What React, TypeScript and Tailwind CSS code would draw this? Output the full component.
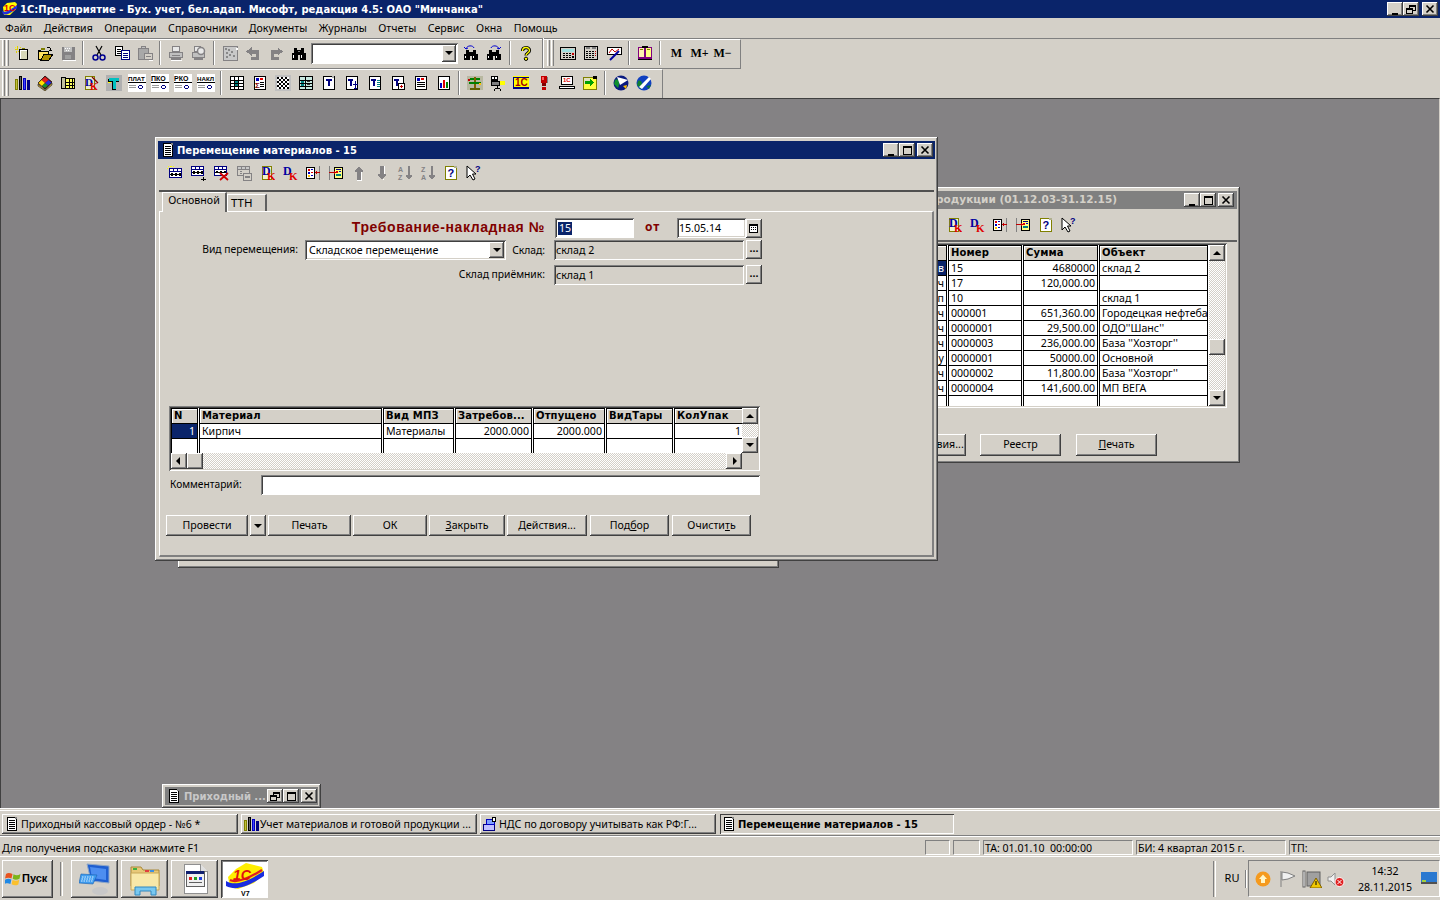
import React from "react";

const RAISED = "shadow-[inset_-1px_-1px_0_#404040,inset_1px_1px_0_#ffffff,inset_-2px_-2px_0_#808080]";
const SUNKEN = "shadow-[inset_1px_1px_0_#808080,inset_-1px_-1px_0_#ffffff,inset_2px_2px_0_#404040,inset_-2px_-2px_0_#d4d0c8]";
const DITHER = "bg-[repeating-conic-gradient(#d4d0c8_0_25%,#ffffff_0_50%)] bg-[length:2px_2px]";
const BOLD = "font-['DejaVu_Sans',sans-serif] font-bold";

function Px({ d = "", s = 16, children, vb = 16 }: { d?: string; s?: number; children?: React.ReactNode; vb?: number }) {
  return (
    <svg width={s} height={s} viewBox={`0 0 ${vb} ${vb}`} shapeRendering="crispEdges" className="block shrink-0">
      {d.split(" ").filter(Boolean).map((q, i) => {
        const [x, y, w, h, c] = q.split(",");
        return <rect key={i} x={x} y={y} width={w} height={h} fill={c} />;
      })}
      {children}
    </svg>
  );
}

const SmoothT = ({ x, y, f, fs, c, ff = "Liberation Sans", b = true, i = false }: { x: number; y: number; f: string; fs: number; c: string; ff?: string; b?: boolean; i?: boolean }) => (
  <text x={x} y={y} fontSize={fs} fill={c} fontFamily={ff} fontWeight={b ? 700 : 400} fontStyle={i ? "italic" : "normal"} shapeRendering="auto">{f}</text>
);

const tableBase = "2,3,13,10,#000080 3,4,3,2,#fff 7,4,3,2,#fff 11,4,3,2,#fff 3,7,11,5,#fff 3,9,11,1,#000 4,8,2,1,#000 8,8,2,1,#000 12,8,2,1,#000 4,10,2,1,#000 8,10,2,1,#000 12,10,2,1,#000";
const docLines = "3,1,10,14,#000 4,2,8,12,#fff 5,4,6,1,#000 5,6,6,1,#000 5,8,6,1,#000 5,10,6,1,#000 5,12,6,1,#000 11,1,2,2,#808080";

const Dk = ({ doc }: { doc?: boolean }) => (
  <Px d={doc ? "3,1,10,14,#808000 4,2,8,12,#f4f0d0" : ""}>
    <SmoothT x={doc ? 3 : 1} y={10} f="D" fs={12} c="#0000a0" ff="Liberation Serif" />
    <SmoothT x={doc ? 8 : 7} y={15} f="K" fs={11} c="#e00000" ff="Liberation Serif" />
  </Px>
);

const Plate = ({ t }: { t: string }) => (
  <Px s={18} vb={18} d="0,0,18,18,#fff 0,8,18,1,#000 1,11,7,1,#999 1,13,7,1,#999 11,11,3,1,#000080 10,12,1,2,#000080 14,12,1,2,#000080 11,14,3,1,#000080">
    <SmoothT x={0} y={7} f={t} fs={t.length > 3 ? 6.2 : 7} c="#000" />
  </Px>
);

const ICONS: Record<string, React.ReactNode> = {
  new: <Px d="5,4,9,11,#000 6,5,7,9,#fff 7,6,6,8,#d8d8b8 1,2,1,1,#ff0 3,1,1,3,#e0d000 1,4,3,1,#e0d000 6,2,1,1,#e0d000 4,6,1,1,#e0d000 8,3,3,1,#808000 2,6,1,2,#e0d000" />,
  open: <Px d="1,5,3,1,#000 1,6,11,9,#000 2,7,9,7,#ffe060 4,3,4,2,#808000 10,2,3,1,#000 13,3,1,3,#000 12,5,3,1,#000"><path d="M4 15 L7 9 H16 L12 15 Z" fill="#b09000" stroke="#000" strokeWidth="1" /></Px>,
  save: <Px d="2,2,13,13,#848284 4,2,8,5,#c0c0c0 5,3,1,1,#fff 7,3,1,1,#fff 9,3,1,1,#fff 6,5,1,1,#fff 8,5,1,1,#fff 5,10,6,4,#a0a0a0 3,15,13,1,#fff" />,
  cut: <Px><g shapeRendering="auto" fill="none"><path d="M5 1 L10 10 M11 1 L6 10" stroke="#000" strokeWidth="1.2" /><ellipse cx="4.5" cy="12.5" rx="2.5" ry="2.5" stroke="#000090" strokeWidth="1.5" /><ellipse cx="11.5" cy="12.5" rx="2.5" ry="2.5" stroke="#000090" strokeWidth="1.5" /></g></Px>,
  copy: <Px d="1,1,8,10,#000 2,2,6,8,#fff 3,4,4,1,#000 3,6,4,1,#000 3,8,4,1,#000 7,5,9,10,#000080 8,6,7,8,#fff 9,8,5,1,#000080 9,10,5,1,#000080 9,12,5,1,#000080" />,
  paste: <Px d="1,3,11,12,#848284 2,4,9,10,#a8a8a8 4,1,5,3,#848284 5,2,3,1,#c0c0c0 7,8,9,7,#848284 8,9,7,5,#d4d0c8 9,11,5,1,#848284 12,15,4,1,#fff" />,
  print: <Px d="4,1,8,6,#848284 5,2,6,4,#e8e8e8 1,7,14,6,#848284 2,8,12,4,#c0c0c0 3,13,10,2,#848284 4,10,8,1,#848284 3,15,11,1,#fff" />,
  preview: <Px d="3,1,7,6,#848284 4,2,5,4,#e8e8e8 1,7,13,6,#848284 2,8,11,4,#c0c0c0 3,13,9,2,#848284"><circle cx="10" cy="6" r="3.5" fill="#e8e8e8" stroke="#848284" strokeWidth="1.5" shapeRendering="auto" /></Px>,
  gdoc: <Px d="1,1,15,15,#848284 2,2,13,13,#c8c8c8 3,3,2,2,#888 6,4,2,2,#888 9,6,2,2,#888 4,7,2,2,#888 7,9,2,2,#888 11,10,2,2,#888 4,11,2,2,#888 14,3,2,2,#fff" />,
  undo: <Px><path d="M6 3 L2 6.5 L6 10 V8 H11 V12 H6 V14 H13 V5 H6 Z" fill="#848284" stroke="#848284" /></Px>,
  redo: <Px><path d="M10 3 L14 6.5 L10 10 V8 H5 V12 H10 V14 H3 V5 H10 Z" fill="#848284" stroke="#848284" /></Px>,
  bino: <Px d="1,8,6,7,#000 9,8,6,7,#000 3,3,3,5,#000 10,3,3,5,#000 6,5,4,5,#000 2,10,1,3,#fff 10,10,1,3,#fff 7,6,2,1,#808080" />,
  binoB: <Px d="1,9,6,6,#000 9,9,6,6,#000 3,5,3,4,#000 10,5,3,4,#000 6,7,4,4,#000 2,11,1,2,#fff 10,11,1,2,#fff"><path d="M3 4 C4 0 10 0 11 3 M3 4 L1 2 M3 4 L5 3" stroke="#0000d0" fill="none" shapeRendering="auto" /></Px>,
  binoF: <Px d="1,9,6,6,#000 9,9,6,6,#000 3,5,3,4,#000 10,5,3,4,#000 6,7,4,4,#000 2,11,1,2,#fff 10,11,1,2,#fff"><path d="M13 4 C12 0 6 0 5 3 M13 4 L15 2 M13 4 L11 3" stroke="#0000d0" fill="none" shapeRendering="auto" /></Px>,
  help: <Px><g shapeRendering="auto"><path d="M4.5 6 C4.5 1.5 11.5 1.5 11.5 5.5 C11.5 8 8 8 8 10.5" stroke="#000" strokeWidth="3.2" fill="none" /><path d="M4.5 6 C4.5 1.5 11.5 1.5 11.5 5.5 C11.5 8 8 8 8 10.5" stroke="#ffff00" strokeWidth="1.4" fill="none" /><circle cx="8" cy="13.8" r="1.7" fill="#ffff00" stroke="#000" /></g></Px>,
  calc: <Px d="0,2,16,13,#000 1,3,14,11,#d4d0c8 2,4,12,3,#a0e0e0 3,8,2,1,#000 6,8,2,1,#000 9,8,2,1,#000 12,8,2,2,#c00000 3,10,2,1,#000 6,10,2,1,#000 9,10,2,1,#000 3,12,2,1,#000 6,12,2,1,#000 9,12,2,1,#000 12,11,2,2,#000" />,
  kbd: <Px d="1,1,14,14,#000 2,2,12,12,#d4d0c8 3,2,4,2,#808080 9,2,4,2,#808080 3,6,2,1,#000 6,6,2,1,#000 9,6,2,1,#000 12,6,1,1,#c00000 3,8,2,1,#000 6,8,2,1,#000 9,8,2,1,#000 12,8,1,1,#c00000 3,10,2,1,#000 6,10,2,1,#000 9,10,2,1,#000 12,10,1,1,#c00000 3,12,2,1,#000 6,12,2,1,#000 9,12,2,1,#000" />,
  chart: <Px d="1,2,15,8,#000 2,3,13,6,#fff"><path d="M3 8 L6 4 L9 7 L13 4" stroke="#c00000" fill="none" shapeRendering="auto" /><path d="M13 6 L4 15" stroke="#0000a0" strokeWidth="2" shapeRendering="auto" /></Px>,
  book: <Px d="1,2,7,12,#800080 2,3,5,9,#fff0b0 8,2,7,12,#800080 9,3,5,9,#ffff80 1,14,14,1,#000 3,4,3,1,#808000 10,4,3,1,#808000 5,1,6,2,#000" />,
  books: <Px d="1,4,3,11,#808000 2,5,1,9,#c0c040 5,1,3,14,#000 6,2,1,12,#606060 9,3,3,12,#0000c0 10,4,1,10,#4040ff 13,5,3,10,#000080" />,
  cbook: <Px><g shapeRendering="auto"><path d="M8 1 L15 7 L8 14 L1 8 Z" fill="#800000" stroke="#000" strokeWidth="0.7" /><path d="M8 2 L11.5 5 L8 8 L4.5 5 Z" fill="#e02020" /><path d="M11.5 5 L14.5 7.5 L11 10.5 L8 8 Z" fill="#2030e0" /><path d="M4.5 5 L8 8 L5 11 L1.5 8 Z" fill="#ffe000" /><path d="M8 8 L11 10.5 L8 13 L5 11 Z" fill="#109030" /><path d="M1 9 L8 15 L15 8 V10 L8 16 L1 11 Z" fill="#c0a040" stroke="#000" strokeWidth="0.5" /></g></Px>,
  ytab: <Px d="1,2,5,12,#000 2,3,3,10,#c0c0a0 5,3,10,11,#000 6,4,8,9,#ffff60 9,4,1,9,#000 12,4,1,9,#000 6,7,8,1,#000 6,10,8,1,#000" />,
  dkarrow: <Px d="2,1,10,14,#808000 3,2,8,12,#e8e8d0"><SmoothT x={2} y={11} f="D" fs={11} c="#0000a0" ff="Liberation Serif" /><SmoothT x={7} y={15} f="K" fs={10} c="#e00000" ff="Liberation Serif" /><path d="M9 2 L15 8" stroke="#800000" strokeWidth="1.2" shapeRendering="auto" /></Px>,
  tee: <Px d="0,0,16,16,#b0b0b0 2,4,11,3,#000 6,4,4,11,#000 3,3,10,3,#00c0c0 7,3,3,11,#00c0c0 2,7,3,1,#ff0" />,
  tgrid: <Px d="1,1,14,14,#000 2,2,12,12,#fff 2,5,12,1,#000 5,2,1,12,#000 9,2,1,12,#000 2,8,12,1,#000 2,11,12,1,#000 6,6,3,2,#008080 6,9,3,2,#008080" />,
  sumdoc: <Px d="2,1,12,14,#000 3,2,10,12,#fff 4,3,3,3,#0000c0 8,3,3,2,#e00000 8,7,4,1,#000 8,9,4,1,#000 8,11,4,1,#000"><SmoothT x={3} y={13} f="Σ" fs={8} c="#800000" /></Px>,
  check: <Px d="0,0,16,16,#c0c0c0 2,2,12,12,#000 4,2,2,2,#fff 8,2,2,2,#fff 12,2,2,2,#fff 2,4,2,2,#fff 6,4,2,2,#fff 10,4,2,2,#fff 4,6,2,2,#fff 8,6,2,2,#fff 12,6,2,2,#fff 2,8,2,2,#fff 6,8,2,2,#fff 10,8,2,2,#fff 4,10,2,2,#fff 8,10,2,2,#fff 12,10,2,2,#fff 2,12,2,2,#fff 6,12,2,2,#fff 10,12,2,2,#fff" />,
  tgrid2: <Px d="1,1,14,14,#000 2,2,12,12,#c8e8e0 2,5,12,1,#000 7,2,1,12,#000 2,8,12,1,#000 2,11,12,1,#000 3,6,3,2,#008080 3,9,3,2,#008080 9,6,3,1,#333 9,9,3,1,#333" />,
  t1: <Px d="2,1,12,14,#000 3,2,10,12,#fff 11,1,2,2,#b0b0b0 5,4,6,2,#000080 7,4,2,7,#000080" />,
  t2: <Px d="2,1,12,14,#000 3,2,10,12,#fff 4,4,5,2,#000080 6,4,2,7,#000080 11,6,1,8,#000080 9,9,5,1,#000080 10,13,3,1,#000080" />,
  t3: <Px d="2,1,12,14,#000 3,2,10,12,#fff 4,4,5,2,#000080 6,4,2,7,#000080 10,5,3,1,#008080 10,7,3,1,#008080 10,9,3,1,#008080 10,11,3,1,#008080" />,
  t4: <Px d="2,1,12,14,#000 3,2,10,12,#fff 4,4,5,2,#000080 6,4,2,7,#000080 8,8,7,7,#000 9,9,5,5,#fff 10,11,3,1,#c00000 11,10,1,3,#c00000" />,
  lines: <Px d="2,1,12,14,#000 3,2,10,12,#fff 4,3,3,3,#0000c0 8,3,3,2,#e00000 4,7,8,1,#000 4,9,8,1,#000 4,11,8,1,#000" />,
  bars: <Px d="2,1,12,14,#000 3,2,10,12,#fff 4,8,2,5,#0000c0 7,5,2,8,#e00000 10,7,2,6,#008000" />,
  tree: <Px d="0,1,16,14,#b8b8a0 3,3,10,2,#008000 7,2,2,13,#806000 2,7,12,2,#008000 3,13,10,2,#606000 1,4,2,2,#c00000 12,8,2,2,#ffc000" />,
  cam: <Px d="1,1,7,6,#000 2,2,2,2,#fff 5,2,2,2,#fff 1,6,9,5,#000 2,7,7,3,#808080 10,6,5,4,#ffff00 7,11,1,2,#000 5,13,5,1,#000 4,14,1,2,#000 10,14,1,2,#000" />,
  oneC: <Px d="0,1,16,13,#ffff00 0,2,1,11,#000080 0,12,16,2,#000080 1,2,15,1,#000080"><SmoothT x={2} y={11} f="1С" fs={10} c="#a00000" /></Px>,
  excl: <Px d="5,1,6,7,#c00000 6,2,2,3,#ff6060 6,8,4,3,#800000 6,12,4,3,#c00000 11,2,1,6,#808080" />,
  pc: <Px d="2,1,12,9,#000 3,2,10,7,#fff 0,11,16,3,#000 1,12,14,1,#fff"><SmoothT x={4} y={7} f="1С" fs={6} c="#e00000" /></Px>,
  note: <Px d="1,2,14,13,#808000 2,3,12,11,#ffff40 2,3,6,6,#e0e0c0 11,1,4,3,#000 3,6,5,3,#00a000 8,4,1,7,#00a000 9,5,1,5,#00a000 10,6,1,3,#00a000 11,7,1,1,#00a000" />,
  globe1: <Px><g shapeRendering="auto"><circle cx="8" cy="8" r="7.5" fill="#0a1a80" /><path d="M2 5 C6 2 7 9 5 13 L1 9 Z" fill="#109030" /><path d="M4 2 L15 5 L7 10 Z" fill="#fff" /><path d="M10 11 L14 10 L13 14 Z" fill="#ffc000" /></g></Px>,
  globe2: <Px><g shapeRendering="auto"><circle cx="8" cy="8" r="7.5" fill="#1040c0" /><path d="M2 6 C6 4 7 10 5 14 L1 10 Z" fill="#108030" /><path d="M3 12 L13 2 L15 4 L6 14 Z" fill="#fff" /><path d="M10 11 L15 10 L13 14 Z" fill="#107040" /></g></Px>,
  tnew: <Px d={tableBase + " 1,1,1,1,#ff0 3,1,2,1,#ff0 0,3,1,1,#ff0 6,1,1,1,#ff0"} />,
  tadd: <Px d={"1,1,13,10,#000080 2,2,3,2,#fff 6,2,3,2,#fff 10,2,3,2,#fff 2,5,11,5,#fff 2,7,11,1,#000 3,6,2,1,#000 7,6,2,1,#000 11,6,2,1,#000 3,8,2,1,#000 7,8,2,1,#000 11,8,2,1,#000 13,12,1,4,#000 11,14,5,1,#000"} />,
  tdel: <Px d={"1,1,13,10,#000080 2,2,3,2,#fff 6,2,3,2,#fff 10,2,3,2,#fff 2,5,11,5,#fff 2,7,11,1,#000 3,6,2,1,#000 7,6,2,1,#000 11,6,2,1,#000"}><path d="M7 8 L15 15 M15 8 L7 15" stroke="#d00000" strokeWidth="1.8" shapeRendering="auto" /></Px>,
  tcopy: <Px d="1,1,13,10,#848284 2,2,3,2,#c8c8c8 6,2,3,2,#c8c8c8 10,2,3,2,#c8c8c8 2,5,11,5,#d4d0c8 7,8,9,8,#848284 8,9,7,6,#d4d0c8 9,11,5,2,#848284 4,6,2,1,#848284 4,8,2,1,#848284" />,
  dkd: <Dk doc />,
  dk: <Dk />,
  ml: <Px d="1,2,9,12,#000 2,3,7,10,#fff 3,4,2,2,#e00000 6,4,2,1,#0000c0 3,7,2,2,#0000c0 6,7,2,1,#e00000 3,10,2,2,#ffc000 6,10,2,1,#0000c0 14,1,1,14,#808080 10,7,5,1,#c00000 11,6,1,3,#c00000" />,
  mr: <Px d="6,2,9,12,#000 7,3,7,10,#ffff80 8,4,5,1,#000080 8,6,2,2,#e00000 11,6,2,1,#0000c0 8,9,5,2,#008080 1,1,1,14,#808080 1,7,7,1,#c00000 6,6,1,3,#c00000" />,
  up: <Px d="7,2,2,1,#848284 6,3,4,1,#848284 5,4,6,1,#848284 4,5,8,2,#848284 6,7,4,8,#848284 10,7,1,8,#fff 6,15,5,1,#fff" />,
  down: <Px d="6,1,4,8,#848284 4,9,8,2,#848284 5,11,6,1,#848284 6,12,4,1,#848284 7,13,2,1,#848284 10,1,1,8,#fff 9,14,1,1,#fff" />,
  az: <Px d="11,1,2,11,#848284 9,10,6,2,#848284 10,12,4,1,#848284 11,13,2,1,#848284"><SmoothT x={1} y={7} f="A" fs={7} c="#848284" /><SmoothT x={1} y={15} f="Z" fs={7} c="#848284" /></Px>,
  za: <Px d="11,1,2,11,#848284 9,10,6,2,#848284 10,12,4,1,#848284 11,13,2,1,#848284"><SmoothT x={1} y={7} f="Z" fs={7} c="#848284" /><SmoothT x={1} y={15} f="A" fs={7} c="#848284" /></Px>,
  qdoc: <Px d="2,1,12,14,#808000 3,2,10,12,#fff 11,1,3,2,#b0b090"><SmoothT x={4.5} y={12} f="?" fs={11} c="#000080" /></Px>,
  whats: <Px><path d="M1 1 V13 L4 10 L7 15 L9 14 L6.5 9 H10 Z" fill="#fff" stroke="#000" shapeRendering="auto" /><SmoothT x={9} y={7} f="?" fs={9} c="#000080" /></Px>,
};

function Tb({ n }: { n: string }) {
  return <div className="w-[23px] h-[22px] flex items-center justify-center shrink-0">{ICONS[n]}</div>;
}
const Sep = () => <div className="w-[8px] h-[24px] flex justify-center shrink-0"><div className="w-[2px] h-full border-l border-l-[#808080] border-r border-r-white" /></div>;
const Grip = () => (
  <div className="flex gap-px h-[26px] w-[7px] shrink-0">
    <div className="w-[3px] bg-[#d4d0c8] border-l border-l-white border-r border-r-[#808080]" />
    <div className="w-[3px] bg-[#d4d0c8] border-l border-l-white border-r border-r-[#808080]" />
  </div>
);

function Glyph({ t }: { t: "min" | "max" | "close" | "restore" }) {
  const d = {
    min: "3,9,6,2,#000",
    max: "2,1,9,9,#000 3,3,7,6,#d4d0c8",
    close: "",
    restore: "4,1,7,6,#000 5,3,5,3,#d4d0c8 1,4,7,6,#000 2,6,5,3,#d4d0c8",
  }[t];
  return (
    <svg width="12" height="11" viewBox="0 0 12 11" shapeRendering="crispEdges" className="block">
      {d.split(" ").filter(Boolean).map((q, i) => {
        const [x, y, w, h, c] = q.split(",");
        return <rect key={i} x={x} y={y} width={w} height={h} fill={c} />;
      })}
      {t === "close" && <path d="M2.5 1.5 L9.5 8.5 M9.5 1.5 L2.5 8.5" stroke="#000" strokeWidth="1.6" shapeRendering="auto" />}
    </svg>
  );
}
const WinBtn = ({ t }: { t: "min" | "max" | "close" | "restore" }) => (
  <div className={`w-[16px] h-[14px] shrink-0 bg-[#d4d0c8] flex items-center justify-center ${RAISED}`}><Glyph t={t} /></div>
);
const Arrow = ({ dir }: { dir: "up" | "down" | "left" | "right" }) => {
  const p = { up: "M4 2 L0 6 H8 Z", down: "M0 2 H8 L4 6 Z", left: "M5 0 V8 L1 4 Z", right: "M3 0 V8 L7 4 Z" }[dir];
  return <svg width="8" height="8" viewBox="0 0 8 8" className="block"><path d={p} fill="#000" /></svg>;
};
const SBtn = ({ dir, cls = "w-[16px] h-[16px]" }: { dir: "up" | "down" | "left" | "right"; cls?: string }) => (
  <div className={`${cls} bg-[#d4d0c8] flex items-center justify-center shrink-0 ${RAISED}`}><Arrow dir={dir} /></div>
);
const Btn = ({ w, h = "h-[21px]", children }: { w: string; h?: string; children: React.ReactNode }) => (
  <div className={`${w} ${h} bg-[#d4d0c8] flex items-center justify-center text-[10.6px] shrink-0 ${RAISED}`}>{children}</div>
);

function Logo({ s = 16 }: { s?: number }) {
  return (
    <svg width={s} height={s} viewBox="0 0 16 16" className="block shrink-0">
      <path d="M1 6 L5 2 L13 1 L15 3 L14 8 L8 14 L2 14 Z" fill="#ffff00" />
      <path d="M0 10 C4 12 8 9 15 4 L15 7 C10 11 5 15 1 13 Z" fill="#2030e0" />
      <text x="2" y="10" fontSize="9" fontWeight="700" fill="#e00000" fontFamily="Liberation Sans">1С</text>
    </svg>
  );
}

const ROW1A = ["new", "open", "save", "|", "cut", "copy", "paste", "|", "print", "preview", "|", "gdoc", "undo", "redo", "bino"];
const ROW1C = ["calc", "kbd", "chart", "|", "book", "|"];
const ROW2 = ["books", "cbook", "ytab", "dkarrow", "tee", "П", "К", "Р", "Н", "|", "tgrid", "sumdoc", "check", "tgrid2", "t1", "t2", "t3", "t4", "lines", "bars", "|", "tree", "cam", "oneC", "excl", "pc", "note", "|", "globe1", "globe2"];
const PLATE: Record<string, string> = { "П": "ПЛАТ", "К": "ПКО", "Р": "РКО", "Н": "НАКЛ" };

const renderIcons = (list: string[]) => list.map((n, i) => n === "|" ? <Sep key={i} /> : PLATE[n] ? <div key={i} className="w-[23px] h-[22px] flex items-center justify-center shrink-0"><Plate t={PLATE[n]} /></div> : <Tb key={i} n={n} />);

function Toolbars() {
  return (
    <div className="flex flex-col shrink-0 border-t border-t-[#808080]">
      <div className="h-[30px] w-[741px] flex items-center border-t border-t-white border-r border-r-[#808080] border-b border-b-[#808080] pl-[2px] pb-[2px]">
        <Grip />
        <div className="w-[1px]" />
        {renderIcons(ROW1A)}
        <div className="ml-[1px] w-[147px] h-[21px] bg-white flex justify-end p-[2px] shrink-0 shadow-[inset_1px_1px_0_#808080,inset_-1px_-1px_0_#ffffff,inset_2px_2px_0_#404040]">
          <SBtn dir="down" cls="w-[14px] h-[17px]" />
        </div>
        <div className="w-[1px]" />
        <Tb n="binoB" />
        <Tb n="binoF" />
        <div className="w-[9px] flex justify-center"><Sep /></div>
        <Tb n="help" />
        <div className="w-[6px] h-[30px] border-r border-r-[#808080] shrink-0" />
        <div className="w-[4px] h-[30px] border-l border-l-white shrink-0" />
        <Grip />
        <div className="w-[2px]" />
        {renderIcons(ROW1C)}
        <div className="w-[1px]" />
        <div className="flex items-center font-['Liberation_Serif',serif] font-bold text-[12px] text-black">
          <span className="w-[23px] text-center">M</span>
          <span className="w-[23px] text-center">M+</span>
          <span className="w-[23px] text-center">M−</span>
        </div>
      </div>
      <div className="h-[29px] w-[663px] flex items-center border-t border-t-white border-r border-r-[#808080] pl-[2px] pb-[2px]">
        <Grip />
        <div className="w-[1px]" />
        {renderIcons(ROW2)}
      </div>
    </div>
  );
}

const MENU = ["Файл", "Действия", "Операции", "Справочники", "Документы", "Журналы", "Отчеты", "Сервис", "Окна", "Помощь"];

const MAIN_COLS = "grid-cols-[27px_183px_71px_77px_72px_67px_70px]";
const HEAD_MAIN = ["N", "Материал", "Вид МПЗ", "Затребов...", "Отпущено", "ВидТары", "КолУпак"];

function HCell({ t }: { t: string }) {
  return <div className={`h-[16px] bg-[#d4d0c8] border border-black px-[2px] text-[10px] leading-[14px] overflow-hidden whitespace-nowrap ${BOLD} shadow-[inset_1px_1px_0_#ffffff]`}><span className="tracking-[0.15px]">{t}</span></div>;
}
function Cell({ t = "", right, sel }: { t?: string; right?: boolean; sel?: boolean }) {
  return (
    <div className={`h-[15px] border-x border-x-black border-b border-b-black px-[2px] text-[10.6px] leading-[15px] overflow-hidden whitespace-nowrap ${right ? "text-right" : ""} ${sel ? "bg-[#0a246a] text-white" : "bg-white"}`}>{t}</div>
  );
}

function MainGrid() {
  return (
    <div className={`ml-[9px] w-[591px] h-[65px] p-[2px] flex flex-col shrink-0 bg-[#d4d0c8] ${SUNKEN}`}>
      <div className="flex h-[45px]">
        <div className={`grid ${MAIN_COLS} gap-x-px bg-white flex-1 overflow-hidden content-start`}>
          {HEAD_MAIN.map((h) => <HCell key={h} t={h} />)}
          <Cell t="1" right sel />
          <Cell t="Кирпич" />
          <Cell t="Материалы" />
          <Cell t="2000.000" right />
          <Cell t="2000.000" right />
          <Cell />
          <Cell t="1" right />
          {Array.from({ length: 7 }).map((_, i) => <div key={i} className="h-[15px] border-x border-x-black" />)}
        </div>
        <div className={`w-[16px] flex flex-col justify-between ${DITHER}`}>
          <SBtn dir="up" />
          <SBtn dir="down" />
        </div>
      </div>
      <div className="flex h-[16px] bg-[#d4d0c8]">
        <SBtn dir="left" />
        <div className={`w-[16px] h-[16px] bg-[#d4d0c8] ${RAISED}`} />
        <div className={`flex-1 ${DITHER}`} />
        <SBtn dir="right" />
        <div className="w-[16px]" />
      </div>
    </div>
  );
}

const SInput = ({ w, t, white }: { w: string; t: string; white?: boolean }) => (
  <div className={`${w} h-[20px] pl-[2px] pr-[3px] pt-[2px] flex items-center text-[10.6px] shrink-0 ${white ? "bg-white" : "bg-[#d4d0c8]"} ${SUNKEN}`}>{t}</div>
);
const DotsBtn = () => <Btn w="w-[16px]" h="h-[19px]"><span className="font-bold leading-none relative -top-[1px]">...</span></Btn>;

function MainWindow() {
  return (
    <div className={`absolute left-[154px] top-[38px] w-[783px] h-[424px] bg-[#d4d0c8] p-[3px] flex flex-col z-20 ${RAISED}`}>
      <div className="h-[18px] mt-px bg-[#0a246a] flex items-center pl-[2px] pr-[2px] shrink-0">
        <Px d={docLines} />
        <span className={`ml-[1px] text-white text-[10px] whitespace-nowrap ${BOLD}`}>Перемещение материалов - 15</span>
        <div className="ml-auto flex"><WinBtn t="min" /><WinBtn t="max" /><div className="w-[2px]" /><WinBtn t="close" /></div>
      </div>
      <div className="h-[31px] flex items-center pl-[5px] pb-[3px] shrink-0">
        {["tnew", "tadd", "tdel", "tcopy", "dkd", "dk", "ml", "mr", "up", "down", "az", "za", "qdoc", "whats"].map((n) => <Tb key={n} n={n} />)}
      </div>
      <div className="flex-1 flex flex-col border-t-2 border-t-[#505050] ml-px mr-px mb-[1px] min-h-0">
        <div className="h-[19px] flex items-end pl-[3px] shrink-0 relative">
          <div className="relative z-10 top-[1px] w-[65px] h-[20px] bg-[#d4d0c8] border-t border-t-white border-l border-l-white border-r-2 border-r-[#606060] text-[10.6px] leading-[15px] text-center">Основной</div>
          <div className="w-[40px] h-[17px] border-t border-t-white border-l border-l-white border-r-2 border-r-[#606060] text-[11.5px] leading-[15px] pl-[3px]">ТТН</div>
        </div>
        <div className="flex-1 flex flex-col border-t border-t-white border-l border-l-white border-r-2 border-r-[#808080] border-b-2 border-b-[#808080]">
          <div className="flex items-center mt-[6px] h-[20px] shrink-0">
            <div className="w-[385px] text-right text-[#800000] font-['Liberation_Sans',sans-serif] font-bold text-[14px] tracking-[0.6px] whitespace-nowrap relative -top-[1px]">Требование-накладная №</div>
            <div className="ml-[10px] w-[79px] h-[20px] p-[3px] flex items-center text-[10.6px] bg-white shrink-0 shadow-[inset_1px_1px_0_#808080,inset_-1px_-1px_0_#ffffff,inset_2px_2px_0_#404040]"><span className="bg-[#0a246a] text-white leading-[13px] px-px">15</span></div>
            <div className="ml-[11px] w-[32px] text-[#800000] font-bold text-[12px] tracking-[1px] relative -top-[1px]">от</div>
            <div className="w-[69px]"><SInput w="w-[69px]" t="15.05.14" white /></div>
            <Btn w="w-[16px]" h="h-[19px]"><Px d="1,2,9,9,#000 2,4,7,6,#fff 3,5,1,1,#000 5,5,1,1,#000 7,5,1,1,#000 3,7,1,1,#000 5,7,1,1,#000 7,7,1,1,#000" s={12} vb={12} /></Btn>
          </div>
          <div className="flex items-center mt-[2px] h-[20px] shrink-0">
            <div className="w-[138px] text-right text-[10.3px] whitespace-nowrap">Вид перемещения:</div>
            <div className={`ml-[7px] w-[201px] h-[20px] bg-white p-[2px] pl-[4px] flex items-center justify-between text-[10.6px] shrink-0 ${SUNKEN}`}>
              <span className="relative top-[1px]">Складское перемещение</span>
              <SBtn dir="down" cls="w-[15px] h-[16px]" />
            </div>
            <div className="w-[39px] text-right text-[10.3px] relative top-[1px]">Склад:</div>
            <div className="ml-[9px] flex gap-[2px]"><SInput w="w-[190px]" t="склад 2" /><DotsBtn /></div>
          </div>
          <div className="flex items-center mt-[5px] h-[20px] shrink-0">
            <div className="w-[385px] text-right text-[10.3px]">Склад приёмник:</div>
            <div className="ml-[9px] flex gap-[2px]"><SInput w="w-[190px]" t="склад 1" /><DotsBtn /></div>
          </div>
          <div className="h-[121px] shrink-0" />
          <MainGrid />
          <div className="flex items-center mt-[4px] h-[20px] shrink-0">
            <div className="ml-[10px] w-[91px] text-[10.2px]">Комментарий:</div>
            <div className={`w-[499px] h-[20px] bg-white shrink-0 shadow-[inset_1px_1px_0_#808080,inset_-1px_-1px_0_#ffffff,inset_2px_2px_0_#404040]`} />
          </div>
          <div className="flex ml-[6px] mt-[20px] gap-[2px]">
            <Btn w="w-[82px]">Провести</Btn>
            <Btn w="w-[16px]"><Arrow dir="down" /></Btn>
            <Btn w="w-[83px]">Печать</Btn>
            <Btn w="w-[74px]">ОК</Btn>
            <Btn w="w-[76px]"><span><u>З</u>акрыть</span></Btn>
            <Btn w="w-[80px]"><span><u>Д</u>ействия...</span></Btn>
            <Btn w="w-[79px] ml-[1px]"><span>Под<u>б</u>ор</span></Btn>
            <Btn w="w-[79px] ml-[1px]"><span>Очисти<u>т</u>ь</span></Btn>
          </div>
        </div>
      </div>
    </div>
  );
}

const ROWS: [string, string, string, string][] = [
  ["в", "15", "4680000", "склад 2"],
  ["ч", "17", "120,000.00", ""],
  ["п", "10", "", "склад 1"],
  ["ч", "000001", "651,360.00", "Городецкая нефтебаза"],
  ["ч", "0000001", "29,500.00", "ОДО''Шанс''"],
  ["ч", "0000003", "236,000.00", "База ''Хозторг''"],
  ["у", "0000001", "50000.00", "Основной"],
  ["ч", "0000002", "11,800.00", "База ''Хозторг''"],
  ["ч", "0000004", "141,600.00", "МП ВЕГА"],
];

function RightWindow() {
  return (
    <div className={`absolute left-[699px] top-[88px] w-[540px] h-[276px] bg-[#d4d0c8] p-[3px] flex flex-col z-10 ${RAISED}`}>
      <div className="h-[18px] mt-px bg-[#808080] flex items-center justify-end pr-[3px] shrink-0">
        <span className={`mr-[67px] text-[#d4d0c8] text-[10.5px] whitespace-nowrap ${BOLD}`}>Учет материалов и готовой продукции (01.12.03-31.12.15)</span>
        <WinBtn t="min" /><WinBtn t="max" /><div className="w-[2px]" /><WinBtn t="close" />
      </div>
      <div className="h-[31px] flex items-center justify-end pr-[157px] shrink-0">
        {["dkd", "dk", "ml", "mr", "qdoc", "whats"].map((n) => <Tb key={n} n={n} />)}
      </div>
      <div className="flex-1 flex flex-col items-end border-t-2 border-t-[#606060] pt-[1px] pr-[10px]">
        <div className={`w-[323px] h-[165px] p-[2px] flex bg-[#d4d0c8] shrink-0 ${SUNKEN}`}>
          <div className="flex-1 grid grid-cols-[41px_74px_75px_109px] gap-x-px bg-white overflow-hidden content-start">
            <HCell t="" /><HCell t="Номер" /><HCell t="Сумма" /><HCell t="Объект" />
            {ROWS.map((r, i) => (
              <React.Fragment key={i}>
                <Cell t={r[0]} right sel={i === 0} />
                <Cell t={r[1]} />
                <Cell t={r[2]} right />
                <Cell t={r[3]} />
              </React.Fragment>
            ))}
            {[0, 1, 2, 3].map((i) => <div key={i} className="h-[15px] border-x border-x-black" />)}
          </div>
          <div className={`w-[16px] flex flex-col ${DITHER}`}>
            <SBtn dir="up" />
            <div className="h-[78px]" />
            <div className={`w-[16px] h-[16px] bg-[#d4d0c8] ${RAISED}`} />
            <div className="flex-1" />
            <SBtn dir="down" />
          </div>
        </div>
        <div className="flex mt-[26px] pr-[70px] gap-[14px]">
          <Btn w="w-[62px]" h="h-[22px]">Действия...</Btn>
          <Btn w="w-[81px]" h="h-[22px]">Реестр</Btn>
          <Btn w="w-[81px] ml-[1px]" h="h-[22px]"><span><u>П</u>ечать</span></Btn>
        </div>
      </div>
    </div>
  );
}

function DocTabs() {
  const Tab = ({ w, icon, t }: { w: string; icon: React.ReactNode; t: string }) => (
    <div className={`${w} h-[20px] flex items-center px-[2px] gap-[1px] text-[10.6px] whitespace-nowrap overflow-hidden shrink-0 ${RAISED}`}>{icon}<span className="relative top-[1px]">{t}</span></div>
  );
  return (
    <div className="h-[28px] shrink-0 border-t border-t-white flex flex-col">
      <div className="h-[2px] border-b border-b-white shrink-0" />
      <div className="flex pl-[2px] pt-[3px] gap-[3px] pb-[1px] border-b border-b-[#808080] flex-1">
        <Tab w="w-[236px]" icon={<Px d={docLines} />} t="Приходный кассовый ордер - №6 *" />
        <Tab w="w-[236px]" icon={ICONS.books} t="Учет материалов и готовой продукции ..." />
        <Tab w="w-[236px]" icon={<Px d="1,8,12,7,#000080 2,9,10,5,#c0c0ff 4,3,9,6,#0000c0 5,4,7,4,#80a0ff 10,1,4,5,#000 11,2,2,3,#fff" />} t="НДС по договору учитывать как РФ:Г..." />
        <div className="w-[234px] ml-[1px] h-[20px] flex items-center px-[1px] gap-[1px] shrink-0 shadow-[inset_1px_1px_0_#404040,inset_-1px_-1px_0_#ffffff]">
          <Px d={docLines} /><span className={`text-[10px] whitespace-nowrap ${BOLD}`}>Перемещение материалов - 15</span>
        </div>
      </div>
    </div>
  );
}

function StatusBar() {
  const P = ({ w, t = "" }: { w: string; t?: string }) => (
    <div className={`${w} h-[15px] shrink-0 border border-t-[#808080] border-l-[#808080] border-r-white border-b-white text-[10.6px] leading-[14px] pl-px whitespace-pre overflow-hidden`}>{t}</div>
  );
  return (
    <div className="h-[21px] shrink-0 flex items-center border-t border-t-white border-b border-b-white pt-[2px]">
      <div className="pl-[2px] text-[10.6px] w-[925px] shrink-0 relative top-[1px]">Для получения подсказки нажмите F1</div>
      <div className="flex gap-[3px]">
        <P w="w-[25px]" /><P w="w-[27px]" />
        <P w="w-[150px]" t="ТА: 01.01.10  00:00:00" />
        <P w="w-[150px]" t="БИ: 4 квартал 2015 г." />
        <P w="w-[151px]" t="ТП:" />
      </div>
    </div>
  );
}

function Taskbar() {
  const TB = ({ children, active }: { children: React.ReactNode; active?: boolean }) => (
    <div className={`w-[47px] h-[38px] flex items-center justify-center shrink-0 ${active ? "bg-white shadow-[inset_1px_1px_0_#404040,inset_-1px_-1px_0_#ffffff,inset_2px_2px_0_#808080]" : RAISED}`}>{children}</div>
  );
  return (
    <div className="h-[43px] shrink-0 flex items-center pl-[2px]">
      <div className={`w-[51px] h-[38px] flex items-center gap-[1px] pl-[3px] shrink-0 ${RAISED}`}>
        <svg width="16" height="16" viewBox="0 0 16 16" className="block shrink-0">
          <path d="M1 3 C3 1.5 5 2 7.5 3 L6.5 7.5 C4.5 6.5 2.5 6.5 0 7.5 Z" fill="#e8531f" />
          <path d="M8.5 3.3 C11 4.5 13 4.5 15.5 3 L14.5 7.7 C12 9 10 9 7.7 7.8 Z" fill="#7cb518" />
          <path d="M0 8.7 C2.5 7.6 4.5 7.6 6.4 8.6 L5.4 13 C3.5 12 1.5 12 -1 13 Z" fill="#1e88e5" />
          <path d="M7.5 9 C10 10 12 10 14.3 8.8 L13.3 13.4 C11 14.6 8.9 14.6 6.6 13.3 Z" fill="#fbc02d" />
        </svg>
        <span className="text-[11px] font-bold font-['Liberation_Sans',sans-serif]">Пуск</span>
      </div>
      <div className="ml-[7px] w-[3px] h-[34px] bg-[#d4d0c8] border-l border-l-[#808080] border-r border-r-white shrink-0" />
      <div className="ml-[8px] flex gap-[3px]">
        <TB>
          <svg width="32" height="34" viewBox="0 0 32 34" className="block">
            <path d="M8 2 L30 4 V21 L12 19 Z" fill="#1f5fd0" stroke="#8fa8c8" />
            <path d="M11 5 L27 7 V18 L13 16 Z" fill="#4d8ef0" />
            <ellipse cx="21" cy="29" rx="8" ry="4" fill="#c8c8c8" />
            <path d="M2 12 L18 13 L14 22 L0 21 Z" fill="#3f9df0" stroke="#1860b0" strokeWidth="0.6" />
            <path d="M3 15 H15 M2.5 17 H14.5 M2 19 H14" stroke="#d8eeff" strokeDasharray="1.5 1" />
          </svg>
        </TB>
        <TB>
          <svg width="32" height="34" viewBox="0 0 32 34" className="block">
            <path d="M2 5 H12 L14 8 H30 V24 H2 Z" fill="#e8c878" stroke="#a88838" />
            <path d="M2 11 H30 V28 H2 Z" fill="#f8e8a8" stroke="#c8a858" />
            <rect x="4" y="6" width="4" height="2" fill="#40b040" /><rect x="16" y="8" width="4" height="2" fill="#e04040" /><rect x="21" y="8" width="4" height="2" fill="#4090e0" />
            <path d="M6 33 V25 H27 V33 H22 V29 H11 V33 Z" fill="#78c8f0" stroke="#3088c0" />
          </svg>
        </TB>
        <TB>
          <svg width="26" height="32" viewBox="0 0 26 32" className="block" shapeRendering="crispEdges">
            <path d="M2 1 H18 L25 8 V30 H2 Z" fill="#fff" stroke="#909090" />
            <path d="M18 1 V8 H25" fill="#e0e0e0" stroke="#909090" />
            <rect x="4" y="8" width="18" height="15" fill="#f0f0f0" stroke="#606060" />
            <rect x="4" y="8" width="18" height="3" fill="#102070" />
            <rect x="7" y="14" width="3" height="3" fill="#e02020" /><rect x="12" y="14" width="3" height="3" fill="#20a020" /><rect x="17" y="14" width="3" height="3" fill="#2040e0" />
            <rect x="7" y="19" width="13" height="1" fill="#606060" />
          </svg>
        </TB>
        <TB active>
          <svg width="42" height="36" viewBox="0 0 42 36" className="block">
            <path d="M4 16 L12 8 L22 2 L38 6 L40 12 L30 22 L14 28 L6 26 Z" fill="#ffee00" />
            <path d="M2 20 C10 25 22 22 40 10 L40 15 C24 26 12 30 2 25 Z" fill="#1a2ce0" />
            <path d="M6 19 C12 22 22 19 38 9" stroke="#e02020" strokeWidth="2.2" fill="none" />
            <text x="9" y="19" fontSize="14" fontWeight="700" fontStyle="italic" fill="#e01010" fontFamily="Liberation Sans">1С</text>
            <text x="17" y="35" fontSize="7" fontWeight="700" fill="#000" fontFamily="Liberation Sans">V7</text>
          </svg>
        </TB>
      </div>
      <div className="ml-auto w-[3px] h-[36px] border-l border-l-[#808080] border-r border-r-white shrink-0" />
      <div className="w-[29px] text-center text-[11px] pl-[3px] shrink-0">RU</div>
      <div className="w-[2px] h-[18px] border-l border-l-[#808080] border-r border-r-white shrink-0" />
      <div className="ml-[1px] w-[192px] h-[37px] flex items-center pl-[6px] shrink-0 border border-t-[#808080] border-l-[#808080] border-r-white border-b-white">
        <svg width="16" height="16" viewBox="0 0 16 16" className="block shrink-0"><circle cx="8" cy="8" r="7.5" fill="#f59a1e" /><path d="M8 3.5 L12 8 H10 V12 H6 V8 H4 Z" fill="#fff6c8" /></svg>
        <div className="ml-[8px]"><svg width="18" height="18" viewBox="0 0 18 18" className="block"><path d="M2 1 V17 M3 2 L9 3 L16 6 L9 9 L3 10 Z" fill="#f0f0f0" stroke="#808080" /></svg></div>
        <div className="ml-[5px]"><svg width="20" height="18" viewBox="0 0 20 18" className="block"><rect x="1" y="1" width="2" height="16" fill="#fff" stroke="#606060" /><rect x="5" y="2" width="13" height="14" fill="#a0a0a0" stroke="#606060" /><path d="M14 8 L20 18 H8 Z" fill="#f0c800" stroke="#806000" /><rect x="13.5" y="11" width="1" height="4" fill="#000" /></svg></div>
        <div className="ml-[5px]"><svg width="18" height="18" viewBox="0 0 18 18" className="block"><path d="M1 7 H4 L8 3 V15 L4 11 H1 Z" fill="#f0f0f0" stroke="#909090" /><circle cx="12.5" cy="12" r="4.5" fill="#e02020" stroke="#fff" /><path d="M10.5 10 L14.5 14 M14.5 10 L10.5 14" stroke="#fff" /></svg></div>
        <div className="w-[72px] text-center text-[10.6px] leading-[16px] ml-[4px] shrink-0"><div>14:32</div><div>28.11.2015</div></div>
        <div><svg width="16" height="14" viewBox="0 0 16 14" className="block" shapeRendering="crispEdges"><rect x="0" y="0" width="16" height="10" fill="#2a78d0" /><rect x="0" y="10" width="16" height="2" fill="#505050" /><rect x="1" y="8" width="4" height="2" fill="#a0d040" /></svg></div>
      </div>
    </div>
  );
}

export default function App() {
  return (
    <div className="w-[1440px] h-[900px] flex flex-col bg-[#d4d0c8] text-black overflow-hidden font-['Noto_Sans',sans-serif] text-[10.6px]">
      <div className="h-[18px] bg-[#0a246a] flex items-center pl-[2px] pr-[2px] shrink-0">
        <Logo />
        <span className={`ml-[2px] text-white text-[10px] whitespace-nowrap ${BOLD}`}>1С:Предприятие - Бух. учет, бел.адап. Мисофт, редакция 4.5: ОАО "Минчанка"</span>
        <div className="ml-auto flex"><WinBtn t="min" /><WinBtn t="restore" /><div className="w-[3px]" /><WinBtn t="close" /></div>
      </div>
      <div className="h-[20px] flex items-center pl-[5px] pt-[2px] gap-[11.5px] shrink-0 text-[10.6px]">
        {MENU.map((m) => <span key={m}>{m}</span>)}
      </div>
      <Toolbars />
      <div className="h-[710px] shrink-0 relative bg-[#848284] border-t border-t-[#404040] border-l border-l-[#404040] border-r border-r-[#d4d0c8]">
        <div className={`absolute left-[177px] top-[441px] w-[601px] h-[28px] bg-[#d4d0c8] ${RAISED}`} />
        <RightWindow />
        <MainWindow />
        <div className={`absolute left-[161px] top-[685px] w-[159px] h-[24px] bg-[#d4d0c8] p-[3px] z-10 ${RAISED}`}>
          <div className="h-full bg-[#808080] flex items-center pl-[1px] pr-[1px]">
            <Px d={docLines} />
            <span className={`ml-[2px] text-[#c8c8c8] text-[10px] whitespace-nowrap ${BOLD}`}>Приходный ...</span>
            <div className="ml-auto flex"><WinBtn t="restore" /><WinBtn t="max" /><div className="w-[2px]" /><WinBtn t="close" /></div>
          </div>
        </div>
      </div>
      <DocTabs />
      <StatusBar />
      <Taskbar />
    </div>
  );
}
